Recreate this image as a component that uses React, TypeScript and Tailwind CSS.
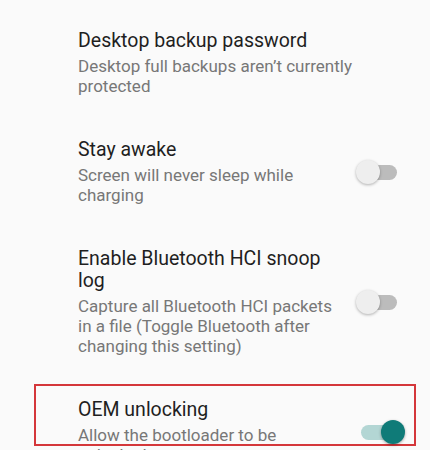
import React from "react";

interface SettingProps {
  title: string;
  summary: string;
  toggle?: "on" | "off";
  highlighted?: boolean;
}

function Switch({ on }: { on: boolean }) {
  return (
    <div className="relative w-[49px] h-[24px] shrink-0 ml-5">
      <div
        className={
          on
            ? "absolute left-[5px] top-[4.5px] w-[36px] h-[15px] rounded-full bg-[#b3d6d4]"
            : "absolute left-[5px] top-[4.5px] w-[36px] h-[15px] rounded-full bg-[#bcbcbc]"
        }
      />
      <div
        className={
          on
            ? "absolute left-[25px] top-0 w-[24px] h-[24px] rounded-full bg-[#0f7b78] shadow-[0_1px_3px_rgba(0,0,0,0.35)]"
            : "absolute left-0 top-0 w-[24px] h-[24px] rounded-full bg-[#eeeeee] shadow-[0_1px_3px_rgba(0,0,0,0.3)]"
        }
      />
    </div>
  );
}

function SettingRow({ title, summary, toggle, highlighted }: SettingProps) {
  return (
    <div className="relative flex items-center pl-[78px] pr-[25px]">
      {highlighted && (
        <div className="absolute left-[34px] right-[14px] top-[-15px] h-[62px] border-2 border-[#d4373a] pointer-events-none" />
      )}
      <div className="flex-1 min-w-0">
        <div className="text-[19.5px] leading-[22px] text-[#1f1f1f]">{title}</div>
        <div className="mt-[4px] text-[17px] leading-[20px] text-[#777777]">{summary}</div>
      </div>
      {toggle && <Switch on={toggle === "on"} />}
    </div>
  );
}

export default function App() {
  return (
    <div className="h-[450px] overflow-hidden bg-[#fafafa] font-['Roboto',sans-serif]">
      <div className="flex flex-col gap-[43px] pt-[30px]">
        <SettingRow
          title="Desktop backup password"
          summary="Desktop full backups aren’t currently protected"
        />
        <SettingRow
          title="Stay awake"
          summary="Screen will never sleep while charging"
          toggle="off"
        />
        <SettingRow
          title="Enable Bluetooth HCI snoop log"
          summary="Capture all Bluetooth HCI packets in a file (Toggle Bluetooth after changing this setting)"
          toggle="off"
        />
        <SettingRow
          title="OEM unlocking"
          summary="Allow the bootloader to be unlocked"
          toggle="on"
          highlighted
        />
      </div>
    </div>
  );
}
